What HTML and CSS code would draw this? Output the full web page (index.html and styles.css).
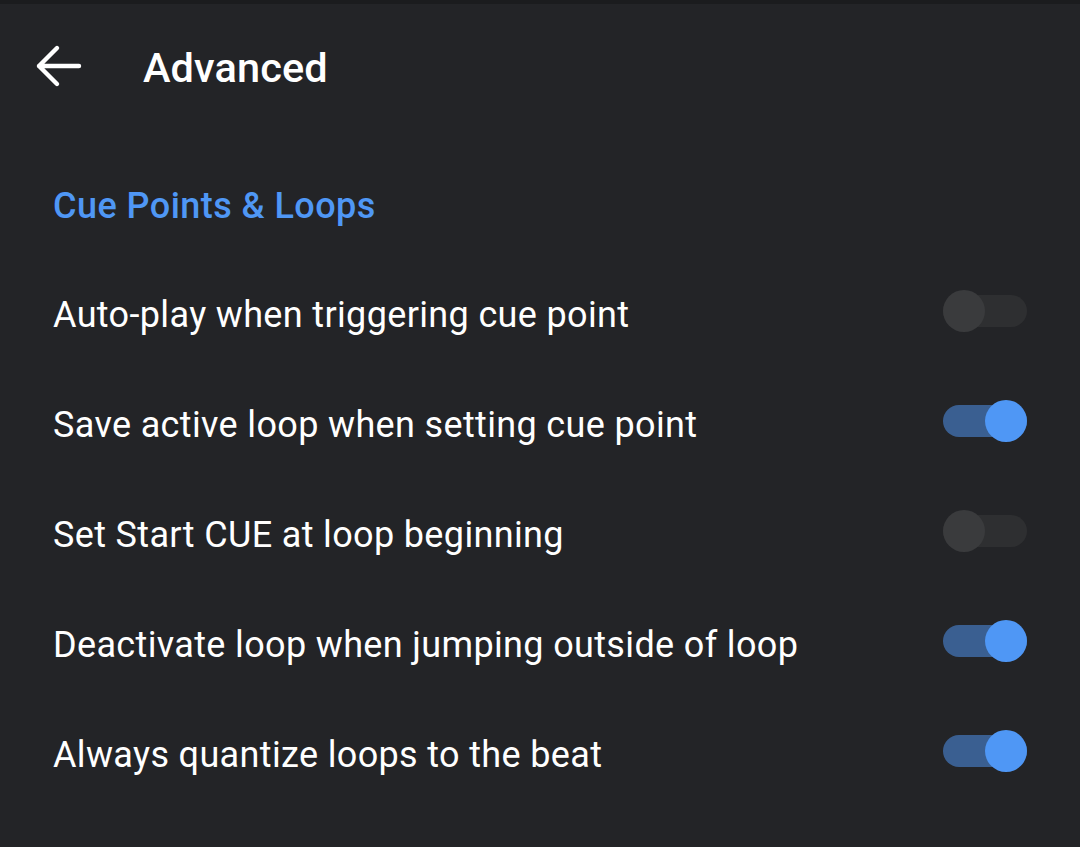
FILE: index.html
```html
<!DOCTYPE html>
<html>
<head>
<meta charset="utf-8">
<link rel="stylesheet" href="styles.css">
</head>
<body>
<div class="status"></div>
<header class="appbar">
  <svg class="back" width="48" height="46" viewBox="0 0 48 46">
    <path d="M22 4 L4 22 L22 40 M4 22 H44" fill="none" stroke="#ffffff" stroke-width="4.4" stroke-linecap="round" stroke-linejoin="round"/>
  </svg>
  <h1 class="title">Advanced</h1>
</header>
<main>
  <h2 class="section">Cue Points &amp; Loops</h2>
  <div class="row"><span class="label">Auto-play when triggering cue point</span><span class="switch"><span class="thumb"></span></span></div>
  <div class="row"><span class="label">Save active loop when setting cue point</span><span class="switch on"><span class="thumb"></span></span></div>
  <div class="row"><span class="label">Set Start CUE at loop beginning</span><span class="switch"><span class="thumb"></span></span></div>
  <div class="row"><span class="label">Deactivate loop when jumping outside of loop</span><span class="switch on"><span class="thumb"></span></span></div>
  <div class="row"><span class="label">Always quantize loops to the beat</span><span class="switch on"><span class="thumb"></span></span></div>
</main>
</body>
</html>
```
FILE: styles.css
```css
html, body {
  margin: 0;
  padding: 0;
  background: #232427;
  height: 100%;
}
body {
  font-family: Roboto, "Noto Sans", sans-serif;
  color: #ffffff;
  overflow: hidden;
}
.status {
  height: 4px;
  background: #1b1c1e;
}
.appbar {
  height: 126px;
  display: flex;
  align-items: center;
}
.back {
  margin-left: 35px;
  flex: none;
}
.title {
  margin: 0 0 0 60px;
  font-size: 41.5px;
  font-weight: 500;
  letter-spacing: 0.1px;
}
.section {
  margin: 0;
  padding: 56px 53px 33px;
  height: 40px;
  line-height: 40px;
  font-size: 36px;
  font-weight: 500;
  letter-spacing: 0.45px;
  color: #4f97f5;
}
.row {
  height: 110px;
  display: flex;
  align-items: center;
  justify-content: space-between;
  padding: 0 53px;
}
.label {
  font-size: 36px;
  font-weight: 400;
  letter-spacing: 0.35px;
  padding-top: 2px;
}
.switch {
  position: relative;
  width: 84px;
  height: 32px;
  border-radius: 16px;
  background: #2e2f31;
  flex: none;
  margin: -3px 0 3px;
}
.thumb {
  position: absolute;
  top: -5px;
  left: 0;
  width: 42px;
  height: 42px;
  border-radius: 50%;
  background: #3a3b3d;
}
.switch.on {
  background: #3a5f91;
}
.switch.on .thumb {
  left: 42px;
  background: #4f97f5;
}
```
